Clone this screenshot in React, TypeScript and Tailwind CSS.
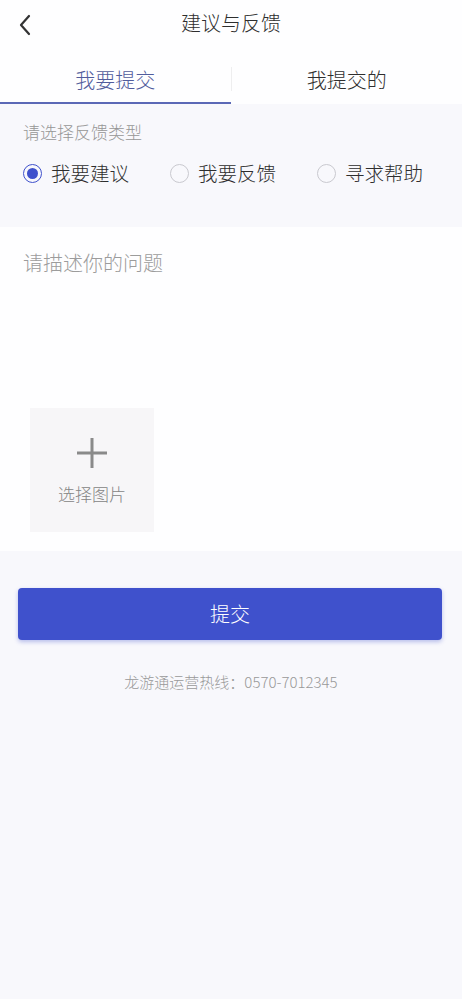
import React from "react";

const font = { fontFamily: '"Noto Sans CJK SC", "Noto Sans", sans-serif' };

function Radio({ checked, label }: { checked?: boolean; label: string }) {
  return (
    <div className="flex items-center gap-[9px]">
      <div
        className={
          "w-[19px] h-[19px] rounded-full flex items-center justify-center border " +
          (checked ? "border-[#3f51cc]" : "border-[#c9c9cf]")
        }
      >
        {checked && <div className="w-[11px] h-[11px] rounded-full bg-[#3f51cc]" />}
      </div>
      <span className="text-[19.5px] leading-[28px] text-[#2e2e2e]">{label}</span>
    </div>
  );
}

export default function App() {
  return (
    <div className="w-[462px] min-h-[999px] bg-[#f8f8fc] flex flex-col font-light" style={font}>
      {/* Header */}
      <div className="h-[46px] bg-[#fefeff] relative flex items-center justify-center">
        <svg
          className="absolute left-[17px] top-[14px]"
          width="16"
          height="22"
          viewBox="0 0 16 22"
          fill="none"
        >
          <path d="M12 2 L4 11 L12 20" stroke="#333333" strokeWidth="2.2" strokeLinecap="round" strokeLinejoin="round" />
        </svg>
        <span className="text-[20px] leading-[28px] text-[#2e2e2e]">建议与反馈</span>
      </div>

      {/* Tabs */}
      <div className="h-[58px] bg-[#fefeff] flex">
        <div className="flex-1 flex items-end justify-center pb-[8px] border-b-2 border-[#5b68b6]">
          <span className="text-[20px] leading-[28px] text-[#515c9c]">我要提交</span>
        </div>
        <div className="w-px h-6 self-end mb-[13px] bg-[#eeeeef]" />
        <div className="flex-1 flex items-end justify-center pb-[10px]">
          <span className="text-[20px] leading-[28px] text-[#2e2e2e]">我提交的</span>
        </div>
      </div>

      {/* Type selection */}
      <div className="px-[23px] pt-[16px] pb-[40px] bg-[#f8f8fc]">
        <div className="text-[17px] leading-[24px] text-[#969696]">请选择反馈类型</div>
        <div className="flex items-center gap-[41px] mt-[15px]">
          <Radio checked label="我要建议" />
          <Radio label="我要反馈" />
          <Radio label="寻求帮助" />
        </div>
      </div>

      {/* Description */}
      <div className="bg-[#fefeff] pt-[22px] pb-[19px]">
        <div className="px-[23px] h-[159px] text-[20px] leading-[28px] text-[#9c9c9c]">请描述你的问题</div>
        <div className="ml-[30px] w-[124px] h-[124px] bg-[#f7f6f8] flex flex-col items-center">
          <svg className="mt-[29px]" width="32" height="32" viewBox="0 0 32 32">
            <path d="M16 1 V31 M1 16 H31" stroke="#8a8a8a" strokeWidth="3" />
          </svg>
          <span className="mt-[13px] text-[17px] leading-[24px] text-[#858585]">选择图片</span>
        </div>
      </div>

      {/* Submit */}
      <div className="pl-[18px] pr-[20px] pt-[37px]">
        <button className="w-full h-[52px] rounded-[4px] bg-[#3f51cc] shadow-[0_2px_4px_rgba(63,81,204,0.35)] text-white text-[20px] leading-[28px] font-light">
          提交
        </button>
      </div>

      <div className="mt-[30px] text-center text-[15px] leading-[24px] text-[#999999]">
        龙游通运营热线：0570-7012345
      </div>
    </div>
  );
}
